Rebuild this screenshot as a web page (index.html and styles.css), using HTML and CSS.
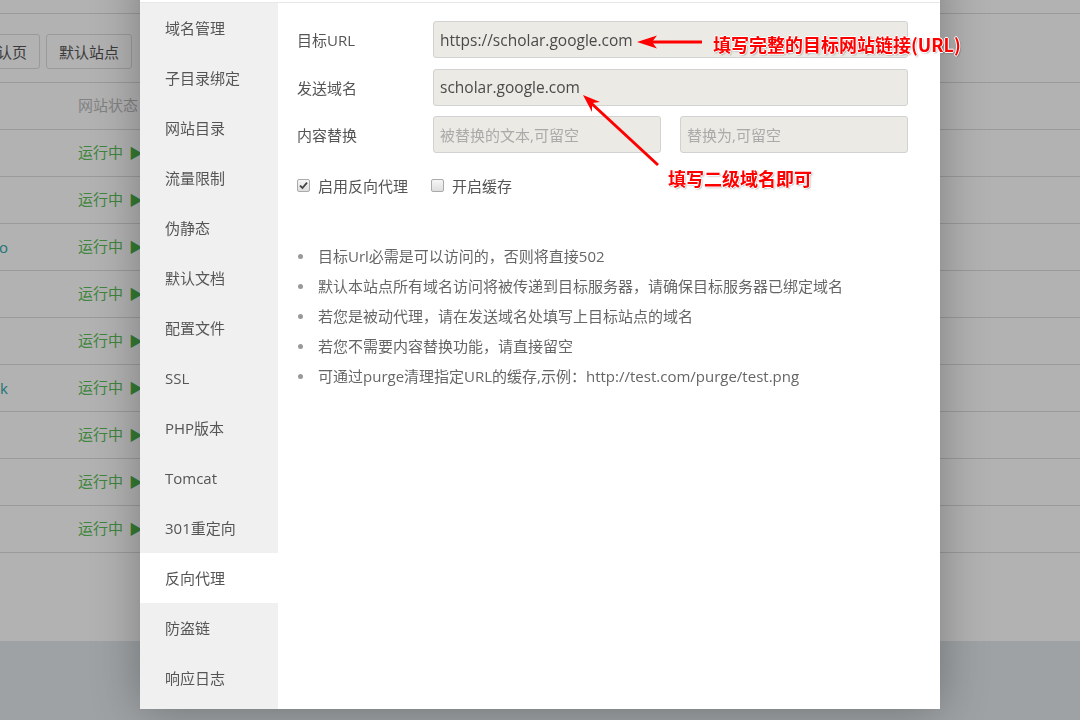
FILE: index.html
```html
<!DOCTYPE html>
<html lang="zh-CN">
<head>
  <meta charset="UTF-8">
  <title>站点修改 - 反向代理</title>
  <link rel="stylesheet" href="styles.css">
</head>
<body>

  <!-- Site list (behind the dialog) -->
  <div class="page-main">
    <div class="topbar"></div>
    <div class="toolbar">
      <button class="btn btn-first">默认页</button>
      <button class="btn">默认站点</button>
    </div>
    <div class="site-table">
      <div class="site-row site-head">
        <div class="cell-name"></div>
        <div class="cell-status">网站状态</div>
      </div>
      <div class="site-row"><div class="cell-name"></div><div class="cell-status">运行中 <span class="play">&#9654;</span></div></div>
      <div class="site-row"><div class="cell-name"></div><div class="cell-status">运行中 <span class="play">&#9654;</span></div></div>
      <div class="site-row"><div class="cell-name">www.demo.co</div><div class="cell-status">运行中 <span class="play">&#9654;</span></div></div>
      <div class="site-row"><div class="cell-name"></div><div class="cell-status">运行中 <span class="play">&#9654;</span></div></div>
      <div class="site-row"><div class="cell-name"></div><div class="cell-status">运行中 <span class="play">&#9654;</span></div></div>
      <div class="site-row"><div class="cell-name">test.link</div><div class="cell-status">运行中 <span class="play">&#9654;</span></div></div>
      <div class="site-row"><div class="cell-name"></div><div class="cell-status">运行中 <span class="play">&#9654;</span></div></div>
      <div class="site-row"><div class="cell-name"></div><div class="cell-status">运行中 <span class="play">&#9654;</span></div></div>
      <div class="site-row"><div class="cell-name"></div><div class="cell-status">运行中 <span class="play">&#9654;</span></div></div>
    </div>
    <div class="pager"></div>
  </div>

  <div class="mask"></div>

  <!-- Site settings dialog -->
  <div class="layer">
    <div class="layer-title">站点修改</div>
    <div class="layer-body">
      <ul class="side-menu">
        <li>域名管理</li>
        <li>子目录绑定</li>
        <li>网站目录</li>
        <li>流量限制</li>
        <li>伪静态</li>
        <li>默认文档</li>
        <li>配置文件</li>
        <li>SSL</li>
        <li>PHP版本</li>
        <li>Tomcat</li>
        <li>301重定向</li>
        <li class="active">反向代理</li>
        <li>防盗链</li>
        <li>响应日志</li>
      </ul>

      <div class="proxy-panel">
        <div class="form-line">
          <span class="form-label">目标URL</span>
          <input class="form-input" type="text" value="https://scholar.google.com">
        </div>
        <div class="form-line">
          <span class="form-label">发送域名</span>
          <input class="form-input" type="text" value="scholar.google.com">
        </div>
        <div class="form-line">
          <span class="form-label">内容替换</span>
          <input class="form-input" type="text" placeholder="被替换的文本,可留空">
          <input class="form-input" type="text" placeholder="替换为,可留空">
        </div>

        <div class="check-line">
          <label class="check-item">
            <span class="check-box checked">
              <svg width="9" height="9" viewBox="0 0 9 9"><path d="M1 4.6 L3.5 7 L8 1.6" fill="none" stroke="#444" stroke-width="1.8"/></svg>
            </span>
            启用反向代理
          </label>
          <label class="check-item">
            <span class="check-box"></span>
            开启缓存
          </label>
        </div>

        <ul class="help-list">
          <li>目标Url必需是可以访问的，否则将直接502</li>
          <li>默认本站点所有域名访问将被传递到目标服务器，请确保目标服务器已绑定域名</li>
          <li>若您是被动代理，请在发送域名处填写上目标站点的域名</li>
          <li>若您不需要内容替换功能，请直接留空</li>
          <li>可通过purge清理指定URL的缓存,示例：http://test.com/purge/test.png</li>
        </ul>
      </div>
    </div>
  </div>

  <!-- Red annotations drawn on top of the screenshot -->
  <div class="annotations">
    <svg class="arrows" width="1080" height="720" viewBox="0 0 1080 720">
      <line x1="702" y1="42" x2="651" y2="42" stroke="#f00" stroke-width="3"/>
      <polygon points="637,42 657,35.5 652,42 657,48.5" fill="#f00"/>
      <line x1="658" y1="165" x2="591" y2="103" stroke="#f00" stroke-width="3"/>
      <polygon points="583,95 600,102 592,103 592,112" fill="#f00"/>
    </svg>
    <div class="note note-url">填写完整的目标网站链接(URL)</div>
    <div class="note note-host">填写二级域名即可</div>
  </div>

</body>
</html>
```

FILE: styles.css
```css
/* Global */
html, body {
  margin: 0;
  padding: 0;
}

body {
  width: 1080px;
  height: 720px;
  overflow: hidden;
  position: relative;
  background-color: #e3e8eb;
  font-family: "Open Sans", "Noto Sans CJK SC", sans-serif;
  font-size: 15px;
  color: #555;
}

/* Site list behind the dialog */
.page-main {
  height: 641px;
  background-color: #fff;
}

.topbar {
  height: 13px;
  border-bottom: 1px solid #ddd;
}

.toolbar {
  height: 48px;
  padding-top: 20px;
  border-bottom: 1px solid #ddd;
  display: flex;
  gap: 6px;
}

.btn {
  height: 35px;
  padding: 0 12px;
  border: 1px solid #ddd;
  border-radius: 3px;
  background-color: #fff;
  font-family: inherit;
  font-size: 15px;
  color: #555;
}

.btn-first {
  margin-left: -31px;
}

.site-row {
  height: 46px;
  border-bottom: 1px solid #ddd;
  display: flex;
  align-items: center;
  line-height: 20px;
}

.cell-name {
  width: 8px;
  display: flex;
  justify-content: flex-end;
  white-space: nowrap;
  color: #2fa8a8;
}

.cell-status {
  margin-left: 70px;
  margin-top: -2px;
  color: #5cbf58;
  white-space: nowrap;
}

.site-head .cell-status {
  color: #bbb;
}

.play {
  margin-left: 2px;
  font-size: 14px;
  color: #4bb04a;
}

.pager {
  height: 87px;
}

.mask {
  position: fixed;
  top: 0;
  left: 0;
  right: 0;
  bottom: 0;
  background-color: rgba(0, 0, 0, 0.3);
}

/* Dialog */
.layer {
  position: absolute;
  left: 140px;
  top: -40px;
  width: 800px;
  height: 749px;
  background-color: #fff;
  box-shadow: 0 0 45px rgba(0, 0, 0, 0.3);
  display: flex;
  flex-direction: column;
}

.layer-title {
  height: 42px;
  line-height: 42px;
  padding-left: 20px;
  border-bottom: 1px solid #e8e8e8;
  background-color: #fff;
  color: #333;
}

.layer-body {
  flex: 1;
  display: flex;
}

.side-menu {
  width: 138px;
  margin: 0;
  padding: 0;
  list-style: none;
  background-color: #f0f0f0;
}

.side-menu li {
  height: 50px;
  line-height: 50px;
  padding-left: 25px;
  color: #555;
}

.side-menu li.active {
  background-color: #fff;
}

.proxy-panel {
  flex: 1;
  padding: 18px 32px 0 19px;
}

.form-line {
  height: 37px;
  margin-bottom: 10.5px;
  display: flex;
  align-items: center;
  gap: 19px;
}

.form-label {
  width: 117px;
  flex-shrink: 0;
  color: #555;
}

.form-input {
  flex: 1;
  min-width: 0;
  height: 37px;
  box-sizing: border-box;
  padding: 0 6px;
  border: 1px solid #d2d2d2;
  border-radius: 3px;
  background-color: #ebeae4;
  font-family: inherit;
  font-size: 15.5px;
  color: #4a4a4a;
  outline: none;
}

.form-input::placeholder {
  font-size: 15px;
  color: #aaa;
}

.check-line {
  margin-top: 22px;
  height: 20px;
  display: flex;
  align-items: center;
  gap: 23px;
}

.check-item {
  display: flex;
  align-items: center;
  gap: 8px;
  color: #555;
}

.check-box {
  width: 11px;
  height: 11px;
  border: 1px solid #aaa;
  border-radius: 2px;
  background: linear-gradient(#f6f6f6, #dedede);
  display: flex;
  align-items: center;
  justify-content: center;
}

.help-list {
  margin: 46px 0 0 0;
  padding: 0;
  list-style: none;
}

.help-list li {
  position: relative;
  height: 30px;
  line-height: 30px;
  padding-left: 21px;
  color: #666;
}

.help-list li::before {
  content: "";
  position: absolute;
  left: 1px;
  top: 13px;
  width: 5px;
  height: 5px;
  border-radius: 50%;
  background-color: #999;
}

/* Annotations */
.annotations {
  position: absolute;
  left: 0;
  top: 0;
  width: 1080px;
  height: 720px;
  pointer-events: none;
}

.arrows {
  position: absolute;
  left: 0;
  top: 0;
}

.note {
  position: absolute;
  font-family: "Noto Sans CJK SC", sans-serif;
  font-size: 18px;
  font-weight: bold;
  line-height: 22px;
  color: #f00;
  white-space: nowrap;
  text-shadow: -1px 0 #fff, 1px 0 #fff, 0 -1px #fff, 0 1px #fff, 1px 1px 2px rgba(0, 0, 0, 0.45);
}

.note-url {
  left: 713px;
  top: 33px;
}

.note-host {
  left: 668px;
  top: 167px;
}
```
